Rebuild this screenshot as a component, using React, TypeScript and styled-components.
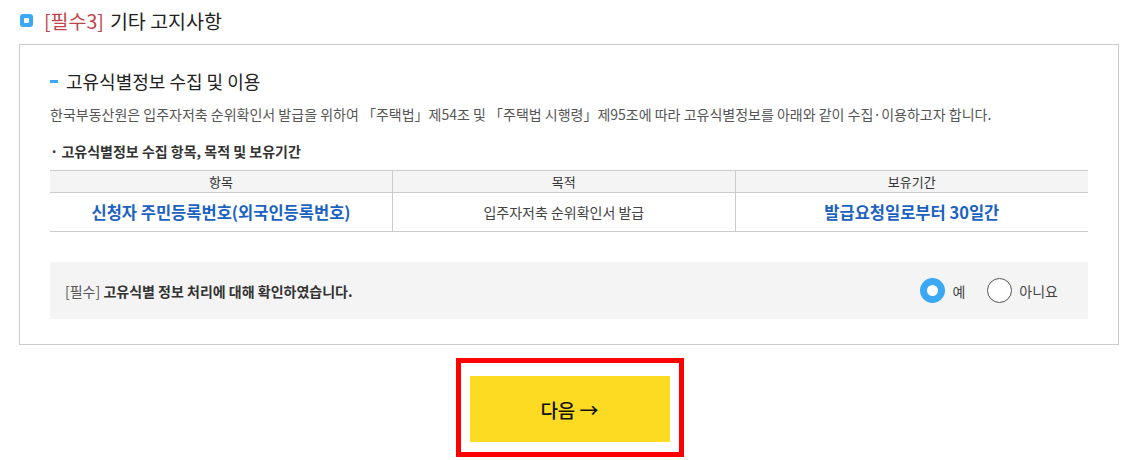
import React, { useState } from 'react';
import styled, { createGlobalStyle } from 'styled-components';

const GlobalStyle = createGlobalStyle`
  body {
    margin: 0;
    background: #fff;
    font-family: "Noto Sans CJK KR", "Noto Sans", sans-serif;
    color: #222;
  }
`;

const Page = styled.div`
  padding: 0 20px 0 19px;
`;

const SectionHeader = styled.h2`
  display: flex;
  align-items: center;
  gap: 11px;
  height: 40px;
  margin: 0 0 4px;
  font-size: 19.5px;
  font-weight: 400;
  color: #222;
`;

const SquareIcon = styled.span`
  display: inline-flex;
  align-items: center;
  justify-content: center;
  width: 13px;
  height: 13px;
  border-radius: 3px;
  background: #3aa8f4;
  margin-left: 1px;

  &::after {
    content: '';
    width: 5px;
    height: 5px;
    background: #fff;
    border-radius: 1px;
  }
`;

const Required = styled.span`
  color: #c0444a;
  margin-right: 6px;
`;

const Box = styled.section`
  border: 1px solid #cccccc;
  padding: 24px 30px 25px;
`;

const SubTitle = styled.h3`
  display: flex;
  align-items: center;
  gap: 8px;
  margin: 0;
  line-height: 24px;
  font-size: 18px;
  font-weight: 400;
  color: #222;

  &::before {
    content: '';
    width: 8px;
    height: 3px;
    background: #3aa8f4;
  }
`;

const Desc = styled.p`
  margin: 11px 0 0;
  line-height: 20px;
  font-size: 14px;
  color: #555;
`;

const Bullet = styled.p`
  margin: 17px 0 0;
  line-height: 20px;
  font-size: 14px;
  font-weight: 700;
  color: #333;
`;

const Table = styled.table`
  width: 100%;
  margin-top: 9px;
  border-collapse: collapse;
  table-layout: fixed;
  border-top: 1px solid #cccccc;
  border-bottom: 1px solid #cccccc;
`;

const Th = styled.th`
  height: 21px;
  padding: 0;
  background: #f4f4f4;
  border-bottom: 1px solid #cccccc;
  border-left: 1px solid #cccccc;
  font-size: 13px;
  font-weight: 400;
  color: #333;

  &:first-child {
    border-left: none;
  }
`;

const Td = styled.td<{ $strong?: boolean }>`
  height: 38px;
  padding: 0;
  text-align: center;
  border-left: 1px solid #cccccc;
  font-size: ${p => (p.$strong ? '16.5px' : '14px')};
  font-weight: ${p => (p.$strong ? 700 : 400)};
  color: ${p => (p.$strong ? '#1b62c0' : '#444')};

  &:first-child {
    border-left: none;
  }
`;

const ConsentBar = styled.div`
  display: flex;
  align-items: center;
  justify-content: space-between;
  height: 57px;
  margin-top: 30px;
  padding: 0 30px 0 15px;
  background: #f4f4f4;
`;

const ConsentText = styled.span`
  font-size: 14px;
  font-weight: 700;
  color: #333;

  b {
    font-weight: 400;
    color: #555;
  }
`;

const RadioGroup = styled.div`
  display: flex;
  align-items: center;
  gap: 22px;
`;

const RadioLabel = styled.label`
  display: flex;
  align-items: center;
  gap: 7px;
  font-size: 14px;
  color: #444;
  cursor: pointer;
`;

const RadioCircle = styled.span<{ $checked: boolean }>`
  box-sizing: border-box;
  width: 25px;
  height: 25px;
  border-radius: 50%;
  background: #fff;
  border: ${p => (p.$checked ? '7px solid #3aa8f4' : '1px solid #555')};
`;

const ButtonRow = styled.div`
  display: flex;
  justify-content: center;
  margin-top: 13px;
  padding-left: 1px;
`;

const Highlight = styled.div`
  border: 5px solid #ff0000;
  padding: 13px 9px 10px;
`;

const NextButton = styled.button`
  display: flex;
  align-items: center;
  justify-content: center;
  gap: 5px;
  width: 200px;
  height: 66px;
  border: none;
  background: #fddb22;
  font-family: "Noto Sans CJK KR", "Noto Sans", sans-serif;
  font-size: 19px;
  font-weight: 500;
  color: #111;
  cursor: pointer;
`;

const rows = [
  { item: '신청자 주민등록번호(외국인등록번호)', purpose: '입주자저축 순위확인서 발급', period: '발급요청일로부터 30일간' },
];

export default function App() {
  const [agree, setAgree] = useState(true);

  return (
    <Page>
      <GlobalStyle />
      <SectionHeader>
        <SquareIcon />
        <span>
          <Required>[필수3]</Required>기타 고지사항
        </span>
      </SectionHeader>
      <Box>
        <SubTitle>고유식별정보 수집 및 이용</SubTitle>
        <Desc>
          한국부동산원은 입주자저축 순위확인서 발급을 위하여 「주택법」제54조 및 「주택법 시행령」제95조에 따라 고유식별정보를 아래와 같이 수집·이용하고자 합니다.
        </Desc>
        <Bullet>· 고유식별정보 수집 항목, 목적 및 보유기간</Bullet>
        <Table>
          <colgroup>
            <col style={{ width: '33%' }} />
            <col style={{ width: '33%' }} />
            <col style={{ width: '34%' }} />
          </colgroup>
          <thead>
            <tr>
              <Th>항목</Th>
              <Th>목적</Th>
              <Th>보유기간</Th>
            </tr>
          </thead>
          <tbody>
            {rows.map(r => (
              <tr key={r.item}>
                <Td $strong>{r.item}</Td>
                <Td>{r.purpose}</Td>
                <Td $strong>{r.period}</Td>
              </tr>
            ))}
          </tbody>
        </Table>
        <ConsentBar>
          <ConsentText>
            <b>[필수]</b> 고유식별 정보 처리에 대해 확인하였습니다.
          </ConsentText>
          <RadioGroup>
            <RadioLabel onClick={() => setAgree(true)}>
              <RadioCircle $checked={agree} />
              예
            </RadioLabel>
            <RadioLabel onClick={() => setAgree(false)}>
              <RadioCircle $checked={!agree} />
              아니요
            </RadioLabel>
          </RadioGroup>
        </ConsentBar>
      </Box>
      <ButtonRow>
        <Highlight>
          <NextButton>다음 →</NextButton>
        </Highlight>
      </ButtonRow>
    </Page>
  );
}
